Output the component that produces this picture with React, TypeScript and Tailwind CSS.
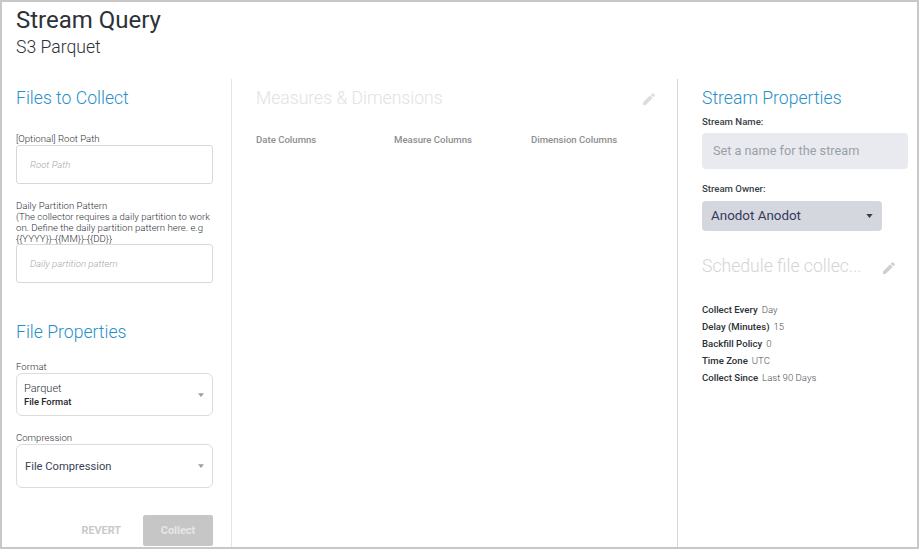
function Caret({ className }: { className: string }) {
  return (
    <svg viewBox="0 0 8 5" className={className} fill="currentColor">
      <path d="M0 0h8L4 5z" />
    </svg>
  );
}

function EditIcon({ className }: { className: string }) {
  return (
    <svg viewBox="0 0 14 14" className={className} fill="currentColor">
      <path d="M0 14v-3L8.300 2.700l3 3L3 14zM9.100 1.900 10.500.500a1 1 0 0 1 1.400 0l1.600 1.600a1 1 0 0 1 0 1.400L12.100 4.900z" />
    </svg>
  );
}

function Detail({ label, value }: { label: string; value: string }) {
  return (
    <div className="flex gap-[4px] h-[17px] items-center text-[9.6px]">
      <span className="font-medium text-[#2b2f36]">{label}</span>
      <span className="font-light text-[#4b5058]">{value}</span>
    </div>
  );
}

export default function App() {
  return (
    <div className="w-[919px] h-[549px] border-2 border-[#c8c8c8] bg-white overflow-hidden flex flex-col font-['Roboto',sans-serif] text-[#3a3f48]">
      <div className="h-[77px] pl-[14px] shrink-0">
        <div className="text-[24px] leading-[28px] pt-[4px] box-content text-[#2d3138]">Stream Query</div>
        <div className="text-[17.6px] leading-[22px] mt-[2px] font-light text-[#2d3138]">S3 Parquet</div>
      </div>

      <div className="flex flex-1 min-h-0">
        {/* left column */}
        <div className="w-[230px] shrink-0 border-r border-[#e4e4e4] pl-[14px] pr-[18px]">
          <h2 className="text-[17.6px] leading-[22px] font-light text-[#2a8fc8] mt-[8px]">Files to Collect</h2>

          <div className="text-[9.6px] leading-[11px] font-light text-[#2d3138] mt-[24px] mb-[1px]">[Optional] Root Path</div>
          <div className="h-[39px] border border-[#d8d8d8] rounded-[3px] flex items-center pl-[13px] pt-[2px] text-[9.6px] italic font-light text-[#a8a8a8]">
            Root Path
          </div>

          <div className="text-[9.6px] leading-[11px] font-light text-[#2d3138] mt-[16px]">
            Daily Partition Pattern
            <br />
            (The collector requires a daily partition to work on. Define the daily partition pattern here. e.g {'{{YYYY}}-{{MM}}-{{DD}}'}
          </div>
          <div className="h-[39px] border border-[#d8d8d8] rounded-[3px] flex items-center pl-[13px] pt-[2px] text-[9.6px] italic font-light text-[#a8a8a8]">
            Daily partition pattern
          </div>

          <h2 className="text-[17.6px] leading-[22px] font-light text-[#2a8fc8] mt-[38px]">File Properties</h2>

          <div className="text-[9.6px] leading-[11px] font-light text-[#2d3138] mt-[18px] mb-[1px]">Format</div>
          <div className="h-[43px] border border-[#dcdcdc] rounded-[6px] flex items-center justify-between pl-[7px] pr-[8px]">
            <div>
              <div className="text-[11px] leading-[14px] font-light text-[#2d3138]">Parquet</div>
              <div className="text-[9.400px] leading-[12px] font-medium text-[#23262c]">File Format</div>
            </div>
            <Caret className="w-[6px] h-[4px] text-[#9a9ea6]" />
          </div>

          <div className="text-[9.6px] leading-[11px] font-light text-[#2d3138] mt-[16px] mb-[1px]">Compression</div>
          <div className="h-[44px] border border-[#dcdcdc] rounded-[6px] flex items-center justify-between pl-[8px] pr-[8px]">
            <span className="text-[11.200px] pt-[2px] text-[#3a3f55]">File Compression</span>
            <Caret className="w-[6px] h-[4px] text-[#9a9ea6]" />
          </div>

          <div className="flex justify-end items-center mt-[27px]">
            <span className="text-[10.800px] pt-[2px] font-bold text-[#c9c9c9] mr-[22px]">REVERT</span>
            <div className="w-[70px] h-[31px] pt-[2px] bg-[#c6c6c6] rounded-[2px] flex items-center justify-center text-[11px] font-bold text-[#e6e6e6]">
              Collect
            </div>
          </div>
        </div>

        {/* middle column */}
        <div className="w-[446px] shrink-0 border-r border-[#d8d8d8] pl-[24px] pr-[22px]">
          <div className="flex items-center justify-between mt-[8px] h-[22px]">
            <h2 className="text-[17.6px] leading-[22px] font-light text-[#e2e2e2]">Measures &amp; Dimensions</h2>
            <EditIcon className="w-[12px] h-[12px] text-[#dcdcdc] translate-y-[1px]" />
          </div>
          <div className="grid grid-cols-[138px_137px_1fr] mt-[25px] text-[9.6px] leading-[12px] font-medium text-[#8e8e8e]">
            <span>Date Columns</span>
            <span>Measure Columns</span>
            <span>Dimension Columns</span>
          </div>
        </div>

        {/* right column */}
        <div className="flex-1 pl-[24px] pr-[9px]">
          <h2 className="text-[17.6px] leading-[22px] font-light text-[#2a8fc8] mt-[8px]">Stream Properties</h2>
          <div className="text-[9.6px] leading-[12px] font-medium text-[#3a3f48] mt-[7px]">Stream Name:</div>
          <div className="h-[36px] mt-[5px] bg-[#e9eaef] rounded-[4px] flex items-center pl-[11px] text-[12.700px] text-[#9aa0a8]">
            Set a name for the stream
          </div>
          <div className="text-[9.6px] leading-[12px] font-medium text-[#3a3f48] mt-[14px]">Stream Owner:</div>
          <div className="w-[180px] h-[30px] mt-[6px] bg-[#d4d7de] rounded-[4px] flex items-center justify-between pl-[9px] pr-[9px] text-[13.400px] text-[#35395c]">
            <span>Anodot Anodot</span>
            <Caret className="w-[7px] h-[4px] text-[#3a3f48]" />
          </div>

          <div className="flex items-center justify-between mt-[24px] h-[22px] pr-[13px]">
            <h2 className="text-[17.6px] leading-[22px] font-light text-[#d4d4d4]">Schedule file collec...</h2>
            <EditIcon className="w-[12px] h-[12px] text-[#cfcfcf] translate-y-[2px]" />
          </div>

          <div className="mt-[25px]">
            <Detail label="Collect Every" value="Day" />
            <Detail label="Delay (Minutes)" value="15" />
            <Detail label="Backfill Policy" value="0" />
            <Detail label="Time Zone" value="UTC" />
            <Detail label="Collect Since" value="Last 90 Days" />
          </div>
        </div>
      </div>
    </div>
  );
}
